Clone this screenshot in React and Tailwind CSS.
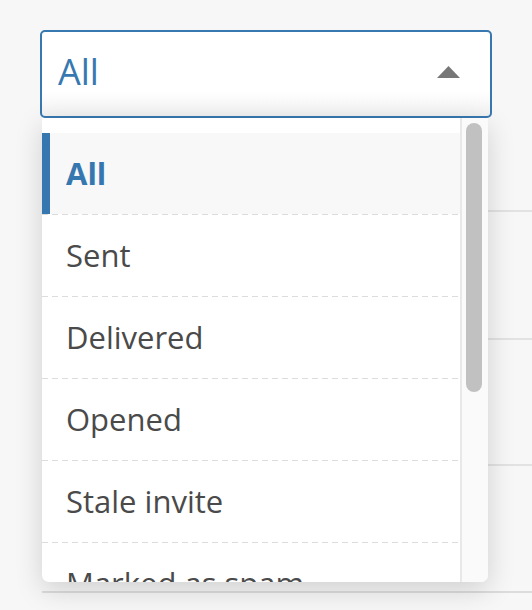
import React from 'react';

const OPTIONS = ['All', 'Sent', 'Delivered', 'Opened', 'Stale invite', 'Marked as spam'];

const FONT = { fontFamily: '"Open Sans", "Noto Sans", Lato, sans-serif' };

function Caret() {
  return (
    <svg width="23" height="12" viewBox="0 0 23 12" className="shrink-0 -mt-1">
      <polygon points="11.5,0 23,12 0,12" fill="#777777" />
    </svg>
  );
}

function Dashed() {
  return <div className="h-px w-full bg-[repeating-linear-gradient(to_right,#dcdcdc_0_6px,transparent_6px_10px)]" />;
}

export default function App() {
  const selected = 'All';

  return (
    <div className="relative w-[532px] h-[610px] overflow-hidden bg-[#f7f7f7]" style={FONT}>
      {/* select */}
      <div className="pt-[30px] pl-[40px] w-[492px]">
        <div className="h-[88px] flex items-center justify-between pl-4 pr-[30px] border-2 border-[#3878b0] rounded-[5px] bg-gradient-to-b from-white from-70% to-[#f2f2f2]">
          <span className="text-[36px] leading-none text-[#3878b0] -mt-1">{selected}</span>
          <Caret />
        </div>
      </div>

      {/* rows of the page underneath */}
      <div className="ml-[42px]">
        <div className="h-[94px] border-b-2 border-[#e2e2e2]" />
        <div className="h-[128px] border-b-2 border-[#e2e2e2]" />
        <div className="h-[126px] border-b-2 border-[#e2e2e2]" />
        <div className="h-[127px] border-b-2 border-[#dcdcdc]" />
      </div>

      {/* dropdown menu */}
      <div className="absolute left-[42px] top-[118px] w-[446px] h-[464px] flex bg-white rounded-b-[7px] overflow-hidden shadow-[0_8px_28px_rgba(0,0,0,0.16)]">
        <div className="flex-1 pt-[15px]">
          {OPTIONS.map((opt, i) => {
            const active = opt === selected;
            return (
              <React.Fragment key={opt}>
                {i > 0 && <Dashed />}
                <div
                  className={
                    active
                      ? 'h-[81px] flex items-center pl-4 border-l-8 border-[#3677b0] bg-[#f8f8f8] text-[31px] font-bold text-[#3677b0]'
                      : 'h-[81px] flex items-center pl-6 text-[31px] text-[#4a4a4a]'
                  }
                >
                  <span className="leading-none whitespace-nowrap">{opt}</span>
                </div>
              </React.Fragment>
            );
          })}
        </div>
        <div className="w-[28px] shrink-0 border-l-2 border-[#e8e8e8] bg-[#fafafa] pt-[5px] pl-[4px]">
          <div className="w-4 h-[269px] rounded-full bg-[#c1c1c1]" />
        </div>
      </div>
    </div>
  );
}
